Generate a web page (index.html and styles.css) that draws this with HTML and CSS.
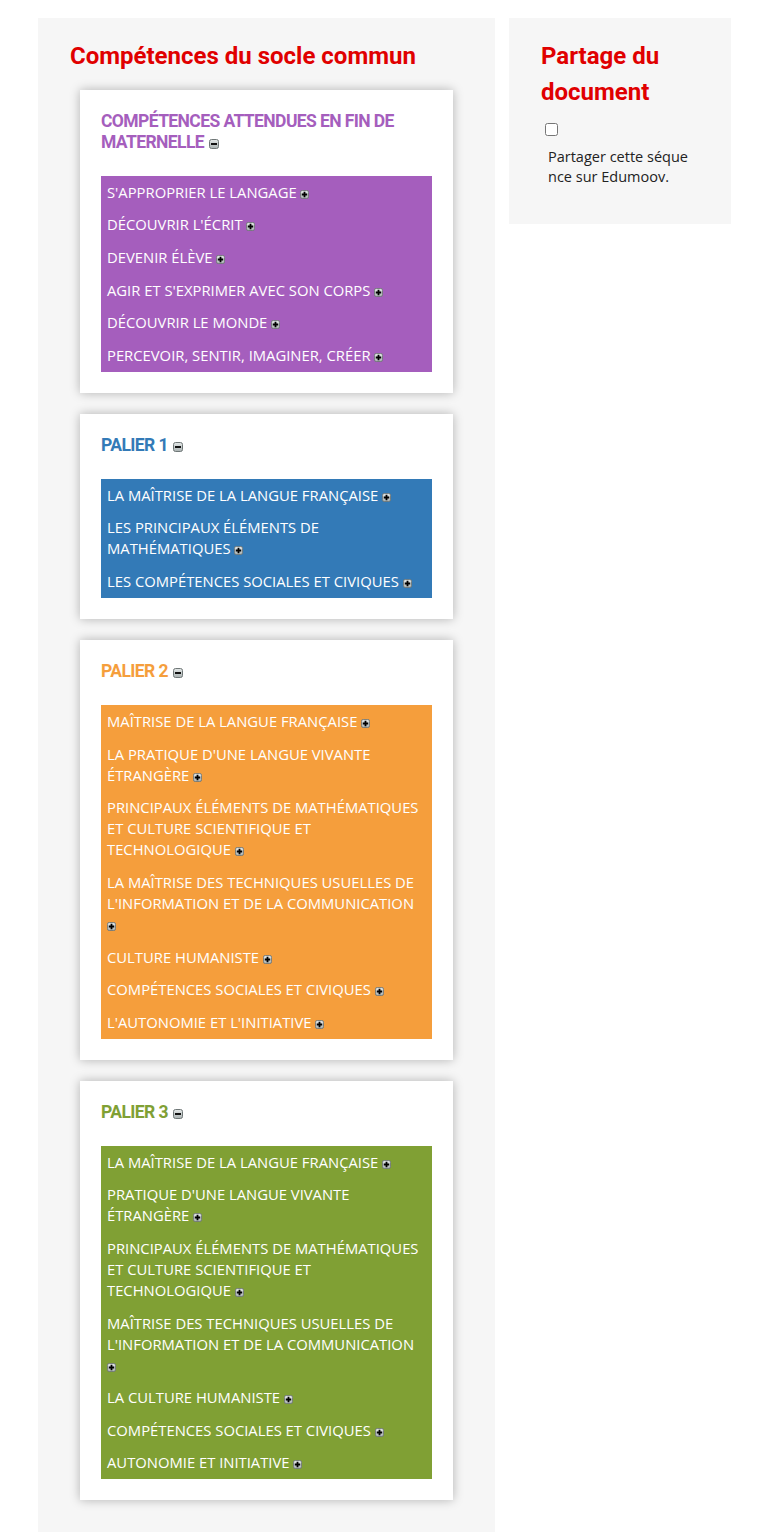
FILE: index.html
```html
<!DOCTYPE html>
<html lang="fr">
<head>
<meta charset="utf-8">
<title>Compétences du socle commun</title>
<link rel="stylesheet" href="styles.css">
</head>
<body>
<svg class="defs" width="0" height="0" aria-hidden="true">
  <defs>
    <linearGradient id="g" x1="0" y1="0" x2="0" y2="1">
      <stop offset="0" stop-color="#e4e8e8"/>
      <stop offset="1" stop-color="#a9b1b1"/>
    </linearGradient>
  </defs>
</svg>
<div class="page">
  <main class="main-panel">
    <h2 class="panel-title">Compétences du socle commun</h2>

    <section class="card">
      <h3 class="card-title purple-text">COMPÉTENCES ATTENDUES EN FIN DE MATERNELLE <svg class="ico" width="10" height="10" viewBox="0 0 10 10"><rect x="0.5" y="0.5" width="9" height="9" rx="2" fill="url(#g)" stroke="#6f7777"/><rect x="2" y="4" width="6" height="2" fill="#111"/></svg></h3>
      <ul class="items purple">
        <li>S'APPROPRIER LE LANGAGE <svg class="ico" width="9" height="9" viewBox="0 0 10 10"><rect x="0.5" y="0.5" width="9" height="9" rx="2" fill="url(#g)" stroke="#6f7777"/><path d="M4 2h2v2h2v2H6v2H4V6H2V4h2z" fill="#000"/></svg></li>
        <li>DÉCOUVRIR L'ÉCRIT <svg class="ico" width="9" height="9" viewBox="0 0 10 10"><rect x="0.5" y="0.5" width="9" height="9" rx="2" fill="url(#g)" stroke="#6f7777"/><path d="M4 2h2v2h2v2H6v2H4V6H2V4h2z" fill="#000"/></svg></li>
        <li>DEVENIR ÉLÈVE <svg class="ico" width="9" height="9" viewBox="0 0 10 10"><rect x="0.5" y="0.5" width="9" height="9" rx="2" fill="url(#g)" stroke="#6f7777"/><path d="M4 2h2v2h2v2H6v2H4V6H2V4h2z" fill="#000"/></svg></li>
        <li>AGIR ET S'EXPRIMER AVEC SON CORPS <svg class="ico" width="9" height="9" viewBox="0 0 10 10"><rect x="0.5" y="0.5" width="9" height="9" rx="2" fill="url(#g)" stroke="#6f7777"/><path d="M4 2h2v2h2v2H6v2H4V6H2V4h2z" fill="#000"/></svg></li>
        <li>DÉCOUVRIR LE MONDE <svg class="ico" width="9" height="9" viewBox="0 0 10 10"><rect x="0.5" y="0.5" width="9" height="9" rx="2" fill="url(#g)" stroke="#6f7777"/><path d="M4 2h2v2h2v2H6v2H4V6H2V4h2z" fill="#000"/></svg></li>
        <li>PERCEVOIR, SENTIR, IMAGINER, CRÉER <svg class="ico" width="9" height="9" viewBox="0 0 10 10"><rect x="0.5" y="0.5" width="9" height="9" rx="2" fill="url(#g)" stroke="#6f7777"/><path d="M4 2h2v2h2v2H6v2H4V6H2V4h2z" fill="#000"/></svg></li>
      </ul>
    </section>

    <section class="card">
      <h3 class="card-title blue-text">PALIER 1 <svg class="ico" width="10" height="10" viewBox="0 0 10 10"><rect x="0.5" y="0.5" width="9" height="9" rx="2" fill="url(#g)" stroke="#6f7777"/><rect x="2" y="4" width="6" height="2" fill="#111"/></svg></h3>
      <ul class="items blue">
        <li>LA MAÎTRISE DE LA LANGUE FRANÇAISE <svg class="ico" width="9" height="9" viewBox="0 0 10 10"><rect x="0.5" y="0.5" width="9" height="9" rx="2" fill="url(#g)" stroke="#6f7777"/><path d="M4 2h2v2h2v2H6v2H4V6H2V4h2z" fill="#000"/></svg></li>
        <li>LES PRINCIPAUX ÉLÉMENTS DE MATHÉMATIQUES <svg class="ico" width="9" height="9" viewBox="0 0 10 10"><rect x="0.5" y="0.5" width="9" height="9" rx="2" fill="url(#g)" stroke="#6f7777"/><path d="M4 2h2v2h2v2H6v2H4V6H2V4h2z" fill="#000"/></svg></li>
        <li>LES COMPÉTENCES SOCIALES ET CIVIQUES <svg class="ico" width="9" height="9" viewBox="0 0 10 10"><rect x="0.5" y="0.5" width="9" height="9" rx="2" fill="url(#g)" stroke="#6f7777"/><path d="M4 2h2v2h2v2H6v2H4V6H2V4h2z" fill="#000"/></svg></li>
      </ul>
    </section>

    <section class="card">
      <h3 class="card-title orange-text">PALIER 2 <svg class="ico" width="10" height="10" viewBox="0 0 10 10"><rect x="0.5" y="0.5" width="9" height="9" rx="2" fill="url(#g)" stroke="#6f7777"/><rect x="2" y="4" width="6" height="2" fill="#111"/></svg></h3>
      <ul class="items orange">
        <li>MAÎTRISE DE LA LANGUE FRANÇAISE <svg class="ico" width="9" height="9" viewBox="0 0 10 10"><rect x="0.5" y="0.5" width="9" height="9" rx="2" fill="url(#g)" stroke="#6f7777"/><path d="M4 2h2v2h2v2H6v2H4V6H2V4h2z" fill="#000"/></svg></li>
        <li>LA PRATIQUE D'UNE LANGUE VIVANTE ÉTRANGÈRE <svg class="ico" width="9" height="9" viewBox="0 0 10 10"><rect x="0.5" y="0.5" width="9" height="9" rx="2" fill="url(#g)" stroke="#6f7777"/><path d="M4 2h2v2h2v2H6v2H4V6H2V4h2z" fill="#000"/></svg></li>
        <li>PRINCIPAUX ÉLÉMENTS DE MATHÉMATIQUES ET CULTURE SCIENTIFIQUE ET TECHNOLOGIQUE <svg class="ico" width="9" height="9" viewBox="0 0 10 10"><rect x="0.5" y="0.5" width="9" height="9" rx="2" fill="url(#g)" stroke="#6f7777"/><path d="M4 2h2v2h2v2H6v2H4V6H2V4h2z" fill="#000"/></svg></li>
        <li>LA MAÎTRISE DES TECHNIQUES USUELLES DE L'INFORMATION ET DE LA COMMUNICATION <svg class="ico" width="9" height="9" viewBox="0 0 10 10"><rect x="0.5" y="0.5" width="9" height="9" rx="2" fill="url(#g)" stroke="#6f7777"/><path d="M4 2h2v2h2v2H6v2H4V6H2V4h2z" fill="#000"/></svg></li>
        <li>CULTURE HUMANISTE <svg class="ico" width="9" height="9" viewBox="0 0 10 10"><rect x="0.5" y="0.5" width="9" height="9" rx="2" fill="url(#g)" stroke="#6f7777"/><path d="M4 2h2v2h2v2H6v2H4V6H2V4h2z" fill="#000"/></svg></li>
        <li>COMPÉTENCES SOCIALES ET CIVIQUES <svg class="ico" width="9" height="9" viewBox="0 0 10 10"><rect x="0.5" y="0.5" width="9" height="9" rx="2" fill="url(#g)" stroke="#6f7777"/><path d="M4 2h2v2h2v2H6v2H4V6H2V4h2z" fill="#000"/></svg></li>
        <li>L'AUTONOMIE ET L'INITIATIVE <svg class="ico" width="9" height="9" viewBox="0 0 10 10"><rect x="0.5" y="0.5" width="9" height="9" rx="2" fill="url(#g)" stroke="#6f7777"/><path d="M4 2h2v2h2v2H6v2H4V6H2V4h2z" fill="#000"/></svg></li>
      </ul>
    </section>

    <section class="card">
      <h3 class="card-title green-text">PALIER 3 <svg class="ico" width="10" height="10" viewBox="0 0 10 10"><rect x="0.5" y="0.5" width="9" height="9" rx="2" fill="url(#g)" stroke="#6f7777"/><rect x="2" y="4" width="6" height="2" fill="#111"/></svg></h3>
      <ul class="items green">
        <li>LA MAÎTRISE DE LA LANGUE FRANÇAISE <svg class="ico" width="9" height="9" viewBox="0 0 10 10"><rect x="0.5" y="0.5" width="9" height="9" rx="2" fill="url(#g)" stroke="#6f7777"/><path d="M4 2h2v2h2v2H6v2H4V6H2V4h2z" fill="#000"/></svg></li>
        <li>PRATIQUE D'UNE LANGUE VIVANTE ÉTRANGÈRE <svg class="ico" width="9" height="9" viewBox="0 0 10 10"><rect x="0.5" y="0.5" width="9" height="9" rx="2" fill="url(#g)" stroke="#6f7777"/><path d="M4 2h2v2h2v2H6v2H4V6H2V4h2z" fill="#000"/></svg></li>
        <li>PRINCIPAUX ÉLÉMENTS DE MATHÉMATIQUES ET CULTURE SCIENTIFIQUE ET TECHNOLOGIQUE <svg class="ico" width="9" height="9" viewBox="0 0 10 10"><rect x="0.5" y="0.5" width="9" height="9" rx="2" fill="url(#g)" stroke="#6f7777"/><path d="M4 2h2v2h2v2H6v2H4V6H2V4h2z" fill="#000"/></svg></li>
        <li>MAÎTRISE DES TECHNIQUES USUELLES DE L'INFORMATION ET DE LA COMMUNICATION <svg class="ico" width="9" height="9" viewBox="0 0 10 10"><rect x="0.5" y="0.5" width="9" height="9" rx="2" fill="url(#g)" stroke="#6f7777"/><path d="M4 2h2v2h2v2H6v2H4V6H2V4h2z" fill="#000"/></svg></li>
        <li>LA CULTURE HUMANISTE <svg class="ico" width="9" height="9" viewBox="0 0 10 10"><rect x="0.5" y="0.5" width="9" height="9" rx="2" fill="url(#g)" stroke="#6f7777"/><path d="M4 2h2v2h2v2H6v2H4V6H2V4h2z" fill="#000"/></svg></li>
        <li>COMPÉTENCES SOCIALES ET CIVIQUES <svg class="ico" width="9" height="9" viewBox="0 0 10 10"><rect x="0.5" y="0.5" width="9" height="9" rx="2" fill="url(#g)" stroke="#6f7777"/><path d="M4 2h2v2h2v2H6v2H4V6H2V4h2z" fill="#000"/></svg></li>
        <li>AUTONOMIE ET INITIATIVE <svg class="ico" width="9" height="9" viewBox="0 0 10 10"><rect x="0.5" y="0.5" width="9" height="9" rx="2" fill="url(#g)" stroke="#6f7777"/><path d="M4 2h2v2h2v2H6v2H4V6H2V4h2z" fill="#000"/></svg></li>
      </ul>
    </section>
  </main>

  <aside class="side-panel">
    <h2 class="panel-title side-title">Partage du document</h2>
    <div class="share">
      <input type="checkbox" class="share-check" id="share">
      <label class="share-label" for="share">Partager cette séquence sur Edumoov.</label>
    </div>
  </aside>
</div>
</body>
</html>
```

FILE: styles.css
```css
* { box-sizing: border-box; }

html, body {
  margin: 0;
  padding: 0;
  background: #ffffff;
}

body {
  font-family: "Open Sans", "Liberation Sans", sans-serif;
  font-size: 14px;
  color: #222222;
}

.defs {
  display: block;
  width: 0;
  height: 0;
  overflow: hidden;
}

.page {
  display: flex;
  align-items: flex-start;
  gap: 14px;
  padding: 18px 33px 0 38px;
}

.main-panel {
  width: 457px;
  flex: none;
  background: #f6f6f6;
  padding: 20px 32px 60px;
}

.side-panel {
  width: 222px;
  flex: none;
  background: #f6f6f6;
  padding: 20px 32px 37px;
}

.panel-title {
  margin: 0 0 16px;
  font-family: Roboto, "Liberation Sans", sans-serif;
  font-weight: 700;
  font-size: 24px;
  line-height: 36px;
  color: #e00000;
}

.side-title {
  margin-bottom: 10px;
}

.card {
  margin: 0 10px 21px;
  background: #ffffff;
  padding: 21px;
  box-shadow: 0 0 10px rgba(0, 0, 0, 0.28);
}

.card-title {
  margin: 0 0 24px;
  font-family: Roboto, "Liberation Sans", sans-serif;
  font-weight: 700;
  font-size: 17.5px;
  letter-spacing: -0.6px;
  line-height: 20.5px;
}

.card-title .ico {
  margin-left: 1px;
}

.purple-text { color: #a55ebd; }
.blue-text { color: #337ab7; }
.orange-text { color: #f59e3c; }
.green-text { color: #80a034; }

.purple { background: #a55ebd; }
.blue { background: #337ab7; }
.orange { background: #f59e3c; }
.green { background: #80a034; }

.items {
  list-style: none;
  margin: 0;
  padding: 0;
}

.items li {
  padding: 5.8px 6px;
  font-size: 14.8px;
  line-height: 21px;
  color: #ffffff;
  text-transform: uppercase;
}

.ico {
  display: inline-block;
  vertical-align: -1px;
}

.share {
  display: flex;
  flex-direction: column;
  align-items: flex-start;
}

.share-check {
  display: block;
  width: 13px;
  height: 13px;
  margin: 3px 3px 3px 4px;
}

.share-label {
  display: block;
  width: 158px;
  margin-top: 8px;
  padding: 0 7px;
  font-size: 14.5px;
  line-height: 20px;
  color: #222222;
  word-break: break-all;
}
```
